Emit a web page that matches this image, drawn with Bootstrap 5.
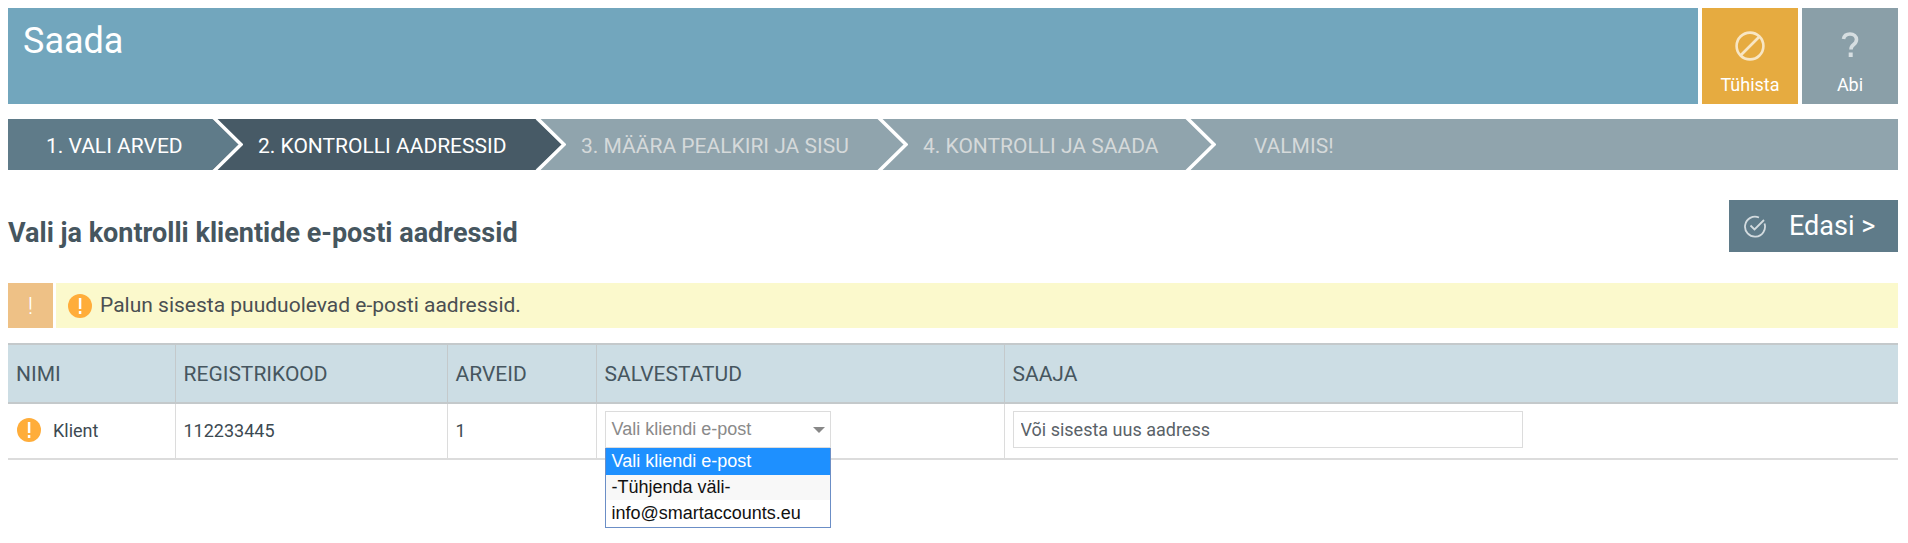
<!DOCTYPE html>
<html lang="et">
<head>
<meta charset="utf-8">
<title>Saada</title>
<link rel="stylesheet" href="https://cdn.jsdelivr.net/npm/bootstrap@5.3.0/dist/css/bootstrap.min.css">
<style>
html, body { height: 543px; overflow: hidden; }
body { font-family: Roboto, sans-serif; color: #46565f; background: #fff; padding: 8px 10px 0 8px; }
.top-row { height: 96px; gap: 4px; }
.top-title { background: #72a6bd; color: #fff; font-size: 36px; line-height: 40px; padding: 13px 15px; font-weight: 400; }
.top-btn { width: 96px; color: #fff; font-size: 18px; line-height: 20px; padding-top: 20px; }
.top-btn svg { display: block; height: 36px; margin-bottom: 11px; }
.tb-warn { background: #e6ab40; }
.tb-help { background: #8a9fa8; }
.step-row { height: 51px; margin-top: 15px; background: #90a4ad; font-size: 21px; line-height: 55px; overflow: visible; }
.step-item { position: relative; flex: none; color: #d5d9da; height: 51px; white-space: nowrap; }
.step-done { background: #5f7b89; color: #fff; }
.step-now { background: #475a66; color: #fff; }
.step-cv { position: absolute; right: -30px; top: -4px; width: 32px; height: 59px; z-index: 2; }
.s1 { width: 205px; padding-left: 38px; }
.s2 { width: 323px; padding-left: 45px; }
.s3 { width: 342px; padding-left: 45px; }
.s4 { width: 308px; padding-left: 45px; }
.s5 { padding-left: 68px; }
.head-row { margin-top: 30px; height: 52px; }
.page-h { font-size: 27px; font-weight: 700; color: #46565f; margin: 13px 0 0 0; line-height: 32px; }
.go-btn { width: 169px; height: 52px; background: #5f7b89; color: #fff; font-size: 27px; border: 0; border-radius: 0; padding: 0 0 0 15px; display: flex; align-items: center; }
.go-btn svg { margin-right: 22px; }
.go-btn:hover { background: #5f7b89; color: #fff; }
.alert-row { margin-top: 31px; height: 45px; gap: 3px; }
.al-mark { width: 45px; background: #eec186; color: #fff; font-size: 24px; font-weight: 300; }
.al-body { background: #fbf9cc; font-size: 21px; color: #4a4f52; padding-left: 12px; gap: 8px; }
.al-body span { padding-top: 1px; }
.cust-table { width: 1890px; margin: 15px 0 0 0; table-layout: fixed; border-collapse: collapse; font-size: 18px; }
.cust-table th { background: #ccdde4; font-size: 21px; font-weight: 400; height: 59px; padding: 2px 7px 0 8px; color: #46565f; border: 1px solid #c4c9cb; border-width: 2px 1px; }
.cust-table td { height: 56px; padding: 0 8px 2px; border-right: 1px solid #dcdcdc; border-left: 1px solid #dcdcdc; border-bottom: 2px solid #dcdcdc; color: #3d4a52; }
.cust-table td:first-child, .cust-table th:first-child { border-left: 0; }
.cust-table td:last-child, .cust-table th:last-child { border-right: 0; }
.pick-box { position: relative; width: 226px; margin-top: -1px; }
.pick-face { height: 37px; border: 1px solid #dcdcdc; color: #8a8a8a; font-family: "Liberation Sans", sans-serif; font-size: 18px; padding: 0 5px 0 6px; display: flex; align-items: center; justify-content: space-between; background: #fff; }
.pick-caret { width: 0; height: 0; border-left: 6px solid transparent; border-right: 6px solid transparent; border-top: 6px solid #888; }
.pick-menu { position: absolute; left: 0; top: 37px; width: 100%; z-index: 5; background: #fff; border: 1px solid #6b8ec6; border-top: 0; font-family: "Liberation Sans", sans-serif; color: #111; font-size: 18px; }
.pick-opt { padding: 0 6px; height: 27px; line-height: 27px; white-space: nowrap; }
.pick-sel { background: #1e90ff; color: #fff; height: 27px; line-height: 27px; }
.pick-alt { background: #f8f8f8; height: 25px; line-height: 25px; }
.new-addr { width: 510px; height: 37px; border: 1px solid #dcdcdc; border-radius: 0; padding: 0 7px; margin-top: -1px; font-size: 18px; color: #5a6268; font-family: Roboto, sans-serif; }
.new-addr::placeholder { color: #5a6268; opacity: 1; }
.ico-col { gap: 12px; padding-left: 1px; }
</style>
</head>
<body>
<div class="d-flex top-row">
  <div class="top-title flex-grow-1">Saada</div>
  <div class="top-btn tb-warn text-center">
    <svg class="mx-auto" width="32" height="36" viewBox="0 0 32 36"><g fill="none" stroke="#f8e6c4" stroke-width="2.6"><circle cx="16" cy="18" r="13.4"/><line x1="7" y1="27" x2="25" y2="9"/></g></svg>
    Tühista
  </div>
  <div class="top-btn tb-help text-center">
    <svg class="mx-auto" width="32" height="36" viewBox="0 0 32 36"><path d="M9.5 11c.6-3.200 3-5 6.500-5 3.800 0 6.500 2.300 6.500 5.600 0 2.500-1.300 3.900-3 5.200-1.700 1.300-2.500 2.200-2.500 4.700" fill="none" stroke="#d6dee1" stroke-width="3.600"/><rect x="14.700" y="24.500" width="4" height="4.500" fill="#d6dee1"/></svg>
    Abi
  </div>
</div>

<div class="d-flex step-row">
  <div class="step-item step-done s1">1. VALI ARVED
    <svg class="step-cv" viewBox="0 0 32 59"><path d="M1 4 L28 29.500 L1 55 L0 55 L0 4Z" fill="#5f7b89"/><path d="M1 1 L30 29.500 L1 58" fill="none" stroke="#fff" stroke-width="3.500"/></svg>
  </div>
  <div class="step-item step-now s2">2. KONTROLLI AADRESSID
    <svg class="step-cv" viewBox="0 0 32 59"><path d="M1 4 L28 29.500 L1 55 L0 55 L0 4Z" fill="#475a66"/><path d="M1 1 L30 29.500 L1 58" fill="none" stroke="#fff" stroke-width="3.500"/></svg>
  </div>
  <div class="step-item s3">3. MÄÄRA PEALKIRI JA SISU
    <svg class="step-cv" viewBox="0 0 32 59"><path d="M1 1 L30 29.500 L1 58" fill="none" stroke="#fff" stroke-width="3.500"/></svg>
  </div>
  <div class="step-item s4">4. KONTROLLI JA SAADA
    <svg class="step-cv" viewBox="0 0 32 59"><path d="M1 1 L30 29.500 L1 58" fill="none" stroke="#fff" stroke-width="3.500"/></svg>
  </div>
  <div class="step-item s5">VALMIS!</div>
</div>

<div class="d-flex justify-content-between align-items-center head-row">
  <h1 class="page-h">Vali ja kontrolli klientide e-posti aadressid</h1>
  <button type="button" class="btn go-btn">
    <svg width="23" height="23" viewBox="0 0 23 23" fill="none" stroke="#d3dbdf" stroke-width="1.800"><path d="M20.500 8.500A10 10 0 1 1 15 2.500"/><path d="M6.500 10.500 L10.500 14.500 L20 5"/></svg>
    Edasi &gt;
  </button>
</div>

<div class="d-flex alert-row">
  <div class="al-mark d-flex align-items-center justify-content-center">!</div>
  <div class="al-body flex-grow-1 d-flex align-items-center">
    <svg width="24" height="24" viewBox="0 0 24 24"><circle cx="12" cy="12" r="12" fill="#ffad3a"/><rect x="10.800" y="4" width="2.500" height="11" fill="#fff"/><rect x="10.800" y="17" width="2.500" height="3" fill="#fff"/></svg>
    <span>Palun sisesta puuduolevad e-posti aadressid.</span>
  </div>
</div>

<table class="cust-table">
  <colgroup><col style="width:167px"><col style="width:272px"><col style="width:149px"><col style="width:408px"><col></colgroup>
  <thead><tr><th>NIMI</th><th>REGISTRIKOOD</th><th>ARVEID</th><th>SALVESTATUD</th><th>SAAJA</th></tr></thead>
  <tbody><tr>
    <td><div class="d-flex align-items-center ico-col">
      <svg width="24" height="24" viewBox="0 0 24 24"><circle cx="12" cy="12" r="12" fill="#ffad3a"/><rect x="10.800" y="4" width="2.500" height="11" fill="#fff"/><rect x="10.800" y="17" width="2.500" height="3" fill="#fff"/></svg>
      <span>Klient</span></div></td>
    <td>112233445</td>
    <td>1</td>
    <td><div class="pick-box">
      <div class="pick-face"><span>Vali kliendi e-post</span><i class="pick-caret"></i></div>
      <div class="pick-menu">
        <div class="pick-opt pick-sel">Vali kliendi e-post</div>
        <div class="pick-opt pick-alt">-Tühjenda väli-</div>
        <div class="pick-opt">info@smartaccounts.eu</div>
      </div>
    </div></td>
    <td><input class="form-control new-addr" type="text" placeholder="Või sisesta uus aadress"></td>
  </tr></tbody>
</table>
</body>
</html>
